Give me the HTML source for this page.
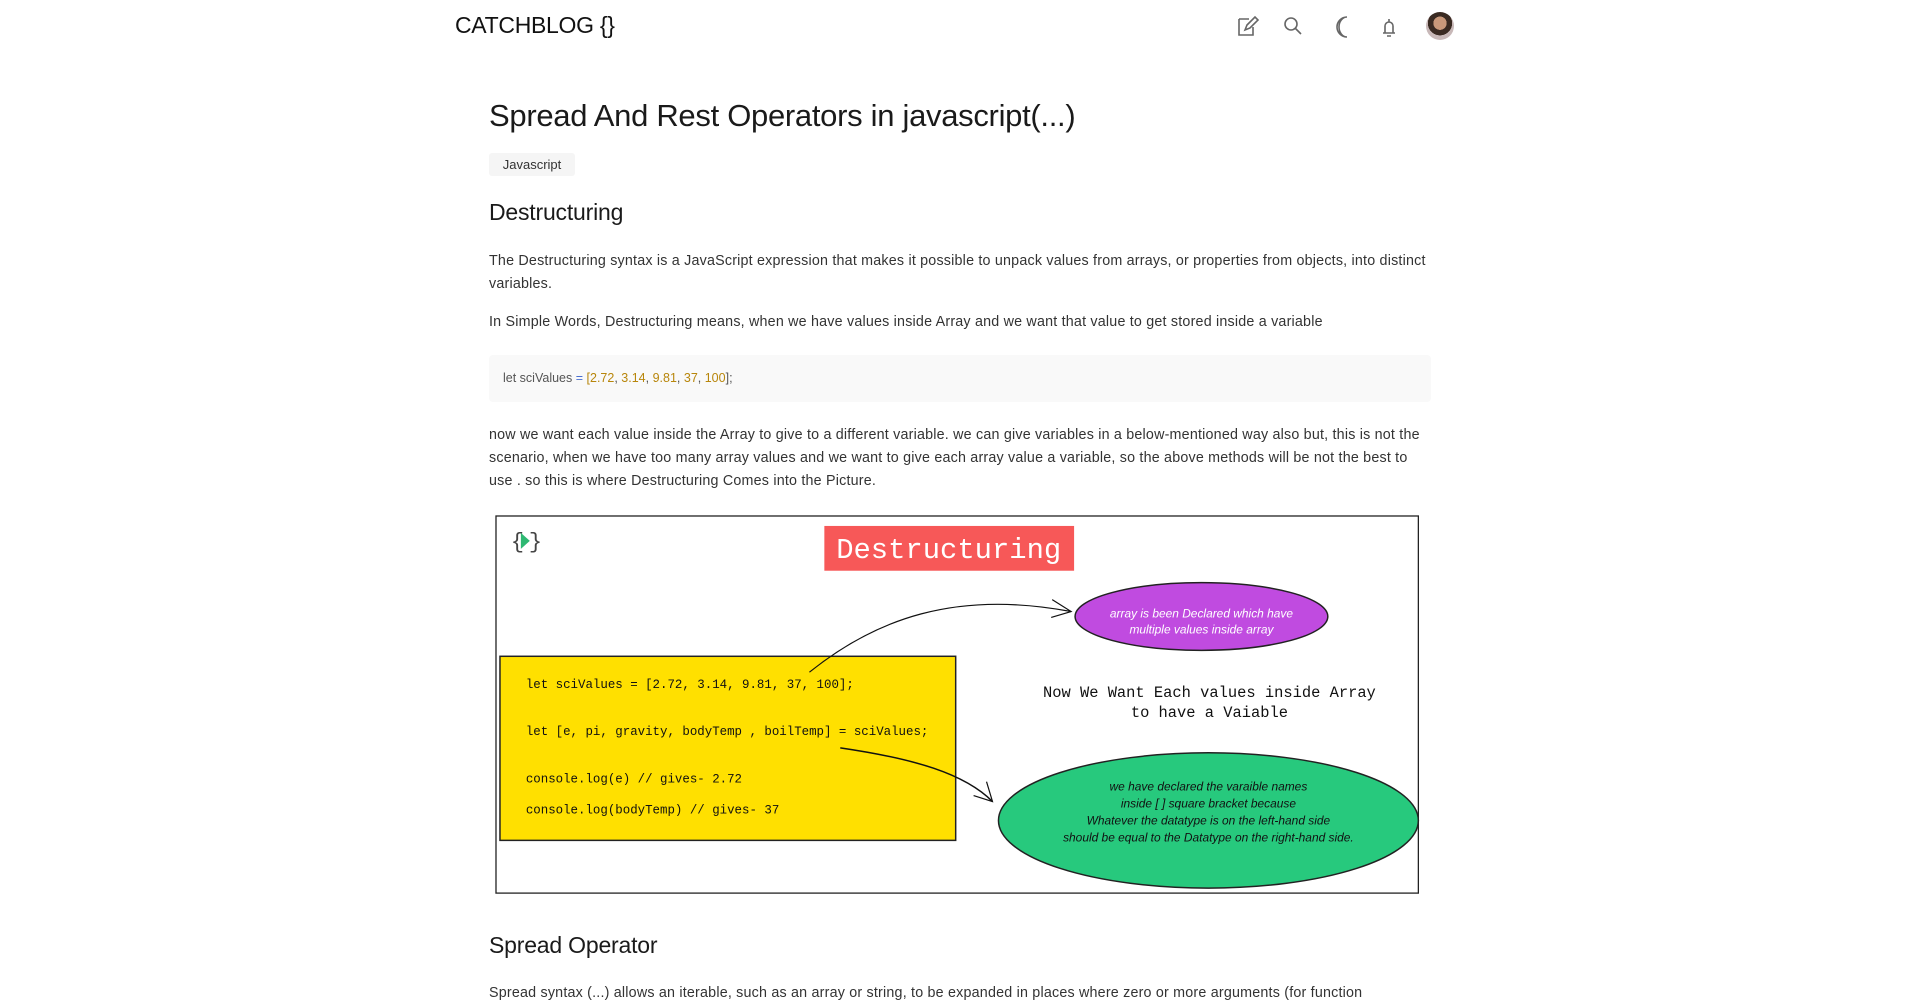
<!DOCTYPE html>
<html><head><meta charset="utf-8"><style>
*{margin:0;padding:0;box-sizing:border-box}
body{width:1910px;height:1002px;overflow:hidden;background:#fff;font-family:"Liberation Sans",sans-serif;color:#222;position:relative}
.abs{position:absolute}
.logo{left:455px;top:12px;font-size:23px;font-weight:500;letter-spacing:-0.3px;color:#111}
h1{position:absolute;left:489px;top:98px;font-size:31px;font-weight:500;color:#1a1a1a;letter-spacing:-0.3px}
.tag{left:489px;top:153px;width:86px;height:23px;background:#f5f5f5;border-radius:3px;font-size:13px;line-height:23px;text-align:center;color:#333}
h2{position:absolute;left:489px;font-size:23px;font-weight:500;color:#1a1a1a;letter-spacing:-0.2px}
p{position:absolute;left:489px;width:942px;font-size:14.3px;line-height:23px;color:#333;letter-spacing:0.2px}
.code{left:489px;top:355px;width:942px;height:47px;background:#f9f9f9;border-radius:4px;font-size:12.5px;line-height:47px;padding-left:14px;color:#555}
.n{color:#b8860b}.o{color:#4a6fd0}
</style></head><body>
<div class="abs logo">CATCHBLOG {}</div>
<svg class="abs" style="left:1233px;top:13px" width="220" height="28" viewBox="0 0 220 28" fill="none" stroke="#666" stroke-width="1.6">
<path d="M6 6h10M6 6v16h14v-8" /><path d="M12 17l2-5 8-8 3 3-8 8z"/>
<circle cx="58" cy="11" r="6"/><path d="M62 15l6 6"/>
<path d="M114 4a10 10 0 1 0 0 20a8 10 0 0 1 0-20z"/>
<path d="M150 20h12M152 20v-7a4 4 0 0 1 8 0v7M156 6v3M154 23h4"/>
</svg>
<div class="abs" style="left:1426px;top:12px;width:28px;height:28px;border-radius:50%;background:radial-gradient(circle at 50% 40%,#c9987a 0 30%,#3a2a22 31% 55%,#c8b8b8 56%)"></div>
<h1>Spread And Rest Operators in javascript(...)</h1>
<div class="abs tag">Javascript</div>
<h2 style="top:199px">Destructuring</h2>
<p style="top:250px">The Destructuring syntax is a JavaScript expression that makes it possible to unpack values from arrays, or properties from objects, into distinct variables.</p>
<p style="top:311px">In Simple Words, Destructuring means, when we have values inside Array and we want that value to get stored inside a variable</p>
<div class="abs code">let sciValues <span class="o">=</span> <span class="n">[2.72</span>, <span class="n">3.14</span>, <span class="n">9.81</span>, <span class="n">37</span>, <span class="n">100</span>];</div>
<p style="top:424px">now we want each value inside the Array to give to a different variable. we can give variables in a below-mentioned way also but, this is not the scenario, when we have too many array values and we want to give each array value a variable, so the above methods will be not the best to use . so this is where Destructuring Comes into the Picture.</p>
<svg class="abs" style="left:495px;top:515px" width="929" height="381" viewBox="498 515 929 381">
<g transform="translate(498 515) scale(0.995) translate(-498 -515)">
<rect x="499" y="516" width="927" height="379" fill="#fff" stroke="#222" stroke-width="1.3"/>
<text x="514" y="548" font-family="Liberation Mono,monospace" font-size="22" fill="#444">{</text><path d="M524 533l9 8-9 8z" fill="#2eb872"/><text x="532" y="548" font-family="Liberation Mono,monospace" font-size="22" fill="#444">}</text>
<rect x="829" y="526" width="251" height="45" fill="#f75858"/>
<text x="954" y="558" text-anchor="middle" font-family="Liberation Mono,monospace" font-size="29" fill="#fff">Destructuring</text>
<ellipse cx="1208" cy="617" rx="127" ry="34" fill="#c04be0" stroke="#222" stroke-width="1.5"/>
<text x="1208" y="618" text-anchor="middle" font-family="Liberation Sans,sans-serif" font-style="italic" font-size="12" fill="#fff">array is been Declared which have</text>
<text x="1208" y="634" text-anchor="middle" font-family="Liberation Sans,sans-serif" font-style="italic" font-size="12" fill="#fff">multiple values inside array</text>
<rect x="503" y="657" width="458" height="185" fill="#ffe000" stroke="#222" stroke-width="1.5"/>
<g font-family="Liberation Mono,monospace" font-size="12.5" fill="#111">
<text x="529" y="689">let sciValues = [2.72, 3.14, 9.81, 37, 100];</text>
<text x="529" y="736">let [e, pi, gravity, bodyTemp , boilTemp] = sciValues;</text>
<text x="529" y="784">console.log(e) // gives- 2.72</text>
<text x="529" y="815">console.log(bodyTemp) // gives- 37</text>
<text x="1216" y="698" text-anchor="middle" font-size="15.5">Now We Want Each values inside Array</text>
<text x="1216" y="718" text-anchor="middle" font-size="15.5">to have a Vaiable</text>
</g>
<ellipse cx="1215" cy="822" rx="211" ry="68" fill="#27c97d" stroke="#222" stroke-width="1.5"/>
<g font-family="Liberation Sans,sans-serif" font-style="italic" font-size="12" fill="#111" text-anchor="middle">
<text x="1215" y="792">we have declared the varaible names</text>
<text x="1215" y="809">inside [ ] square bracket because</text>
<text x="1215" y="826">Whatever the datatype is on the left-hand side</text>
<text x="1215" y="843">should be equal to the Datatype on the right-hand side.</text>
</g>
<path d="M814 673C880 620 960 590 1077 612" fill="none" stroke="#111" stroke-width="1.2"/>
<path d="M1058 600l19 12-20 6" fill="none" stroke="#111" stroke-width="1.2"/>
<path d="M845 749C920 760 970 775 998 803" fill="none" stroke="#111" stroke-width="1.5"/>
<path d="M992 783l6 20-19-6" fill="none" stroke="#111" stroke-width="1.2"/>
</g>
</svg>
<h2 style="top:932px">Spread Operator</h2>
<p style="top:982px">Spread syntax (...) allows an iterable, such as an array or string, to be expanded in places where zero or more arguments (for function</p>
</body></html>
